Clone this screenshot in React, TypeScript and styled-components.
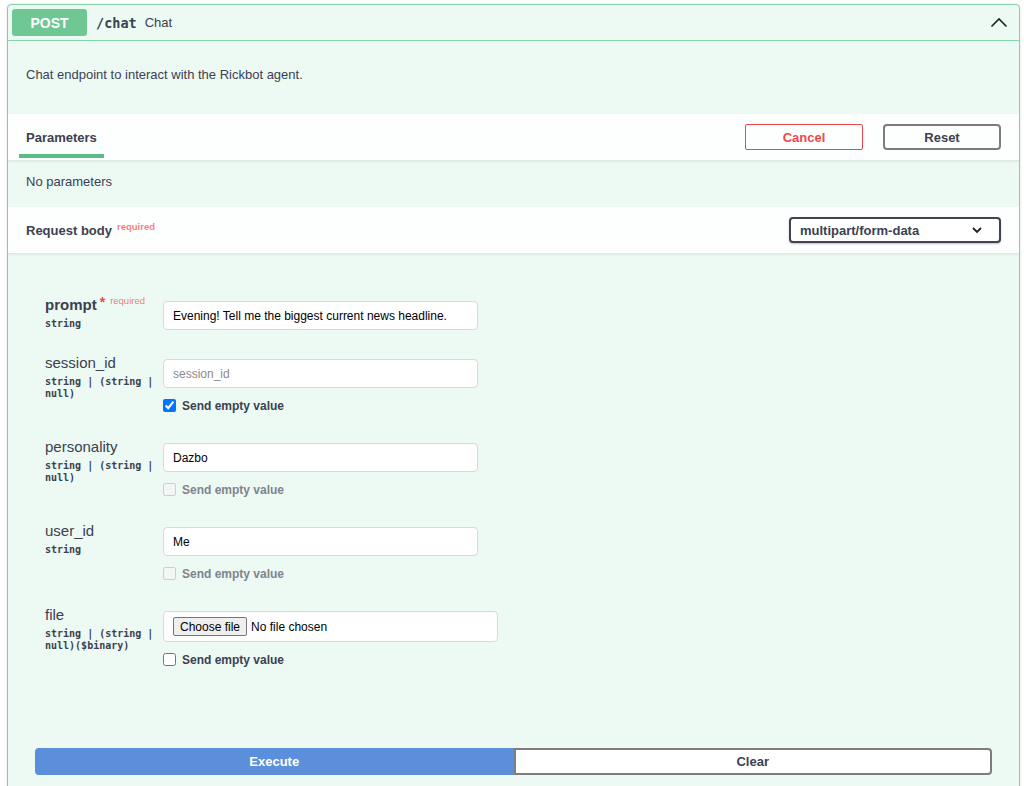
import React from 'react';
import styled, { createGlobalStyle } from 'styled-components';

const GlobalStyle = createGlobalStyle`
    body {
        margin: 0;
        background: #ffffff;
        font-family: "Liberation Sans", Arial, sans-serif;
        color: #3b4151;
    }
`;

const Opblock = styled.div`
    margin: 4px 4px 0 7px;
    border: 1px solid #82d4a8;
    border-radius: 4px;
    background: #edf9f3;
    min-height: 820px;
    box-shadow: 0 0 3px rgba(0, 0, 0, 0.12);
`;

const Summary = styled.div`
    display: flex;
    align-items: center;
    padding: 4px 4px;
    border-bottom: 1px solid #82d4a8;
`;

const Method = styled.span`
    width: 75px;
    height: 27px;
    display: flex;
    align-items: center;
    justify-content: center;
    border-radius: 3px;
    background: #6fc794;
    color: #fff;
    font-size: 14px;
    font-weight: 700;
`;

const Path = styled.span`
    margin-left: 9px;
    font-family: "DejaVu Sans Mono", "Liberation Mono", monospace;
    font-size: 13.5px;
    font-weight: 700;
    color: #3b4151;
`;

const Title = styled.span`
    margin-left: 8px;
    font-size: 13px;
    color: #3b4151;
`;

const Arrow = styled.svg`
    margin-left: auto;
    margin-right: 7px;
`;

const Description = styled.p`
    margin: 0;
    padding: 26px 18px 32px;
    font-size: 13px;
    line-height: 15px;
`;

const SectionHeader = styled.div`
    display: flex;
    align-items: center;
    height: 46px;
    padding: 0 18px;
    background: rgba(255, 255, 255, 0.85);
    border-bottom: 1px solid #dfe7e3;
    box-shadow: 0 1px 2px rgba(0, 0, 0, 0.06);
`;

const Tab = styled.div`
    position: relative;
    height: 100%;
    display: flex;
    align-items: center;
    margin-left: -7px;
    padding: 0 7px;
    font-size: 13px;
    font-weight: 700;

    &::after {
        content: '';
        position: absolute;
        left: 0;
        right: 0;
        bottom: 2px;
        height: 4px;
        background: #5bbd85;
    }
`;

const HeaderTitle = styled.h4`
    margin: 0;
    font-size: 13px;
    font-weight: 700;
`;

const RequiredMark = styled.sup`
    margin-left: 5px;
    font-size: 9.5px;
    font-weight: 700;
    color: rgba(255, 0, 0, 0.55);
`;

const Actions = styled.div`
    margin-left: auto;
    display: flex;
    gap: 20px;
`;

const Button = styled.button<{ $tone?: 'cancel' }>`
    width: 118px;
    height: 26px;
    box-sizing: border-box;
    background: transparent;
    border: ${(p) => (p.$tone === 'cancel' ? '1.5px solid #f04848' : '2px solid #7d7d7d')};
    border-radius: ${(p) => (p.$tone === 'cancel' ? '2px' : '4px')};
    color: ${(p) => (p.$tone === 'cancel' ? '#f04848' : '#3b4151')};
    font-family: inherit;
    font-size: 13px;
    font-weight: 700;
    cursor: pointer;
`;

const NoParams = styled.div`
    padding: 13px 18px 18px;
    font-size: 13px;
    line-height: 15px;
`;

const Select = styled.div`
    margin-left: auto;
    width: 212px;
    height: 26px;
    box-sizing: border-box;
    display: flex;
    align-items: center;
    justify-content: space-between;
    padding: 0 16px 0 9px;
    border: 2px solid #41444e;
    border-radius: 4px;
    background: #fff;
    box-shadow: 0 1px 2px rgba(0, 0, 0, 0.25);
    font-size: 13px;
    font-weight: 700;
`;

const Form = styled.div`
    display: flex;
    flex-direction: column;
    gap: 24px;
    padding: 42px 0 0 37px;
`;

const Row = styled.div`
    display: grid;
    grid-template-columns: 118px 1fr;
    align-items: start;
`;

const NameCol = styled.div`
    display: flex;
    flex-direction: column;
`;

const Name = styled.div<{ $required?: boolean }>`
    height: 18px;
    font-size: 15px;
    line-height: 18px;
    font-weight: ${(p) => (p.$required ? 700 : 400)};
    white-space: nowrap;
`;

const Star = styled.span`
    position: relative;
    top: -3px;
    margin-left: 3px;
    color: #f04848;
    font-size: 14px;
    line-height: 0;
`;

const ReqTag = styled.span`
    position: relative;
    top: -6px;
    margin-left: 5px;
    font-size: 9.5px;
    font-weight: 400;
    line-height: 0;
    color: rgba(255, 0, 0, 0.55);
`;

const Type = styled.div`
    margin-top: 4px;
    width: 112px;
    font-family: "DejaVu Sans Mono", "Liberation Mono", monospace;
    font-size: 10px;
    line-height: 12px;
    font-weight: 700;
`;

const FieldCol = styled.div`
    display: flex;
    flex-direction: column;
    padding-top: 5px;
`;

const TextInput = styled.input`
    width: 315px;
    height: 29px;
    box-sizing: border-box;
    padding: 0 9px;
    border: 1px solid #d9d9d9;
    border-radius: 4px;
    background: #fff;
    font-family: "Liberation Sans", Arial, sans-serif;
    font-size: 12px;
    color: #000;

    &::placeholder {
        color: #8a8a8a;
    }
`;

const FileBox = styled.div`
    width: 335px;
    height: 31px;
    box-sizing: border-box;
    display: flex;
    align-items: center;
    gap: 4px;
    padding: 0 9px;
    border: 1px solid #d9d9d9;
    border-radius: 4px;
    background: #fff;
    font-size: 12px;
    color: #000;
`;

const FileButton = styled.span`
    height: 17px;
    display: flex;
    align-items: center;
    padding: 0 6px;
    border: 1px solid #767676;
    border-radius: 2px;
    background: #efefef;
`;

const CheckLine = styled.label<{ $disabled?: boolean }>`
    display: flex;
    align-items: center;
    gap: 6px;
    height: 17px;
    margin-top: 9px;
    font-size: 12px;
    font-weight: 700;
    color: ${(p) => (p.$disabled ? '#7f848d' : '#3b4151')};
`;

const Check = styled.input`
    width: 13px;
    height: 13px;
    margin: 0;
`;

const ExecuteWrapper = styled.div`
    display: flex;
    padding: 80px 27px 0;
`;

const WideButton = styled.button<{ $primary?: boolean }>`
    flex: 1;
    height: 27px;
    box-sizing: border-box;
    border: 2px solid ${(p) => (p.$primary ? '#5b8fdc' : '#7d7d7d')};
    border-radius: ${(p) => (p.$primary ? '4px 0 0 4px' : '0 4px 4px 0')};
    background: ${(p) => (p.$primary ? '#5b8fdc' : '#fff')};
    color: ${(p) => (p.$primary ? '#fff' : '#3b4151')};
    font-family: inherit;
    font-size: 13px;
    font-weight: 700;
`;

const params = [
    { name: 'session_id', type: 'string | (string | null)', placeholder: 'session_id', value: '', checked: true, disabled: false },
    { name: 'personality', type: 'string | (string | null)', placeholder: '', value: 'Dazbo', checked: false, disabled: true },
    { name: 'user_id', type: 'string', placeholder: '', value: 'Me', checked: false, disabled: true },
];

const App: React.FC = () => {
    return (
        <>
            <GlobalStyle />
            <Opblock>
                <Summary>
                    <Method>POST</Method>
                    <Path>/chat</Path>
                    <Title>Chat</Title>
                    <Arrow width="18" height="18" viewBox="0 0 18 18">
                        <path d="M1.5 12.5 L9 5 L16.5 12.5" fill="none" stroke="#222" strokeWidth="1.6" />
                    </Arrow>
                </Summary>
                <Description>Chat endpoint to interact with the Rickbot agent.</Description>
                <SectionHeader>
                    <Tab>Parameters</Tab>
                    <Actions>
                        <Button $tone="cancel">Cancel</Button>
                        <Button>Reset</Button>
                    </Actions>
                </SectionHeader>
                <NoParams>No parameters</NoParams>
                <SectionHeader>
                    <HeaderTitle>
                        Request body<RequiredMark>required</RequiredMark>
                    </HeaderTitle>
                    <Select>
                        multipart/form-data
                        <svg width="12" height="8" viewBox="0 0 12 8">
                            <path d="M2 2 L6 6 L10 2" fill="none" stroke="#222" strokeWidth="1.8" />
                        </svg>
                    </Select>
                </SectionHeader>
                <Form>
                    <Row>
                        <NameCol>
                            <Name $required>
                                prompt<Star>*</Star>
                                <ReqTag>required</ReqTag>
                            </Name>
                            <Type>string</Type>
                        </NameCol>
                        <FieldCol>
                            <TextInput readOnly value="Evening! Tell me the biggest current news headline." />
                        </FieldCol>
                    </Row>
                    {params.map((p) => (
                        <Row key={p.name}>
                            <NameCol>
                                <Name>{p.name}</Name>
                                <Type>{p.type}</Type>
                            </NameCol>
                            <FieldCol>
                                <TextInput readOnly value={p.value} placeholder={p.placeholder} />
                                <CheckLine $disabled={p.disabled}>
                                    <Check type="checkbox" readOnly checked={p.checked} disabled={p.disabled} />
                                    Send empty value
                                </CheckLine>
                            </FieldCol>
                        </Row>
                    ))}
                    <Row>
                        <NameCol>
                            <Name>file</Name>
                            <Type>string | (string | null)($binary)</Type>
                        </NameCol>
                        <FieldCol>
                            <FileBox>
                                <FileButton>Choose file</FileButton>
                                No file chosen
                            </FileBox>
                            <CheckLine>
                                <Check type="checkbox" readOnly checked={false} />
                                Send empty value
                            </CheckLine>
                        </FieldCol>
                    </Row>
                </Form>
                <ExecuteWrapper>
                    <WideButton $primary>Execute</WideButton>
                    <WideButton>Clear</WideButton>
                </ExecuteWrapper>
            </Opblock>
        </>
    );
};

export default App;
